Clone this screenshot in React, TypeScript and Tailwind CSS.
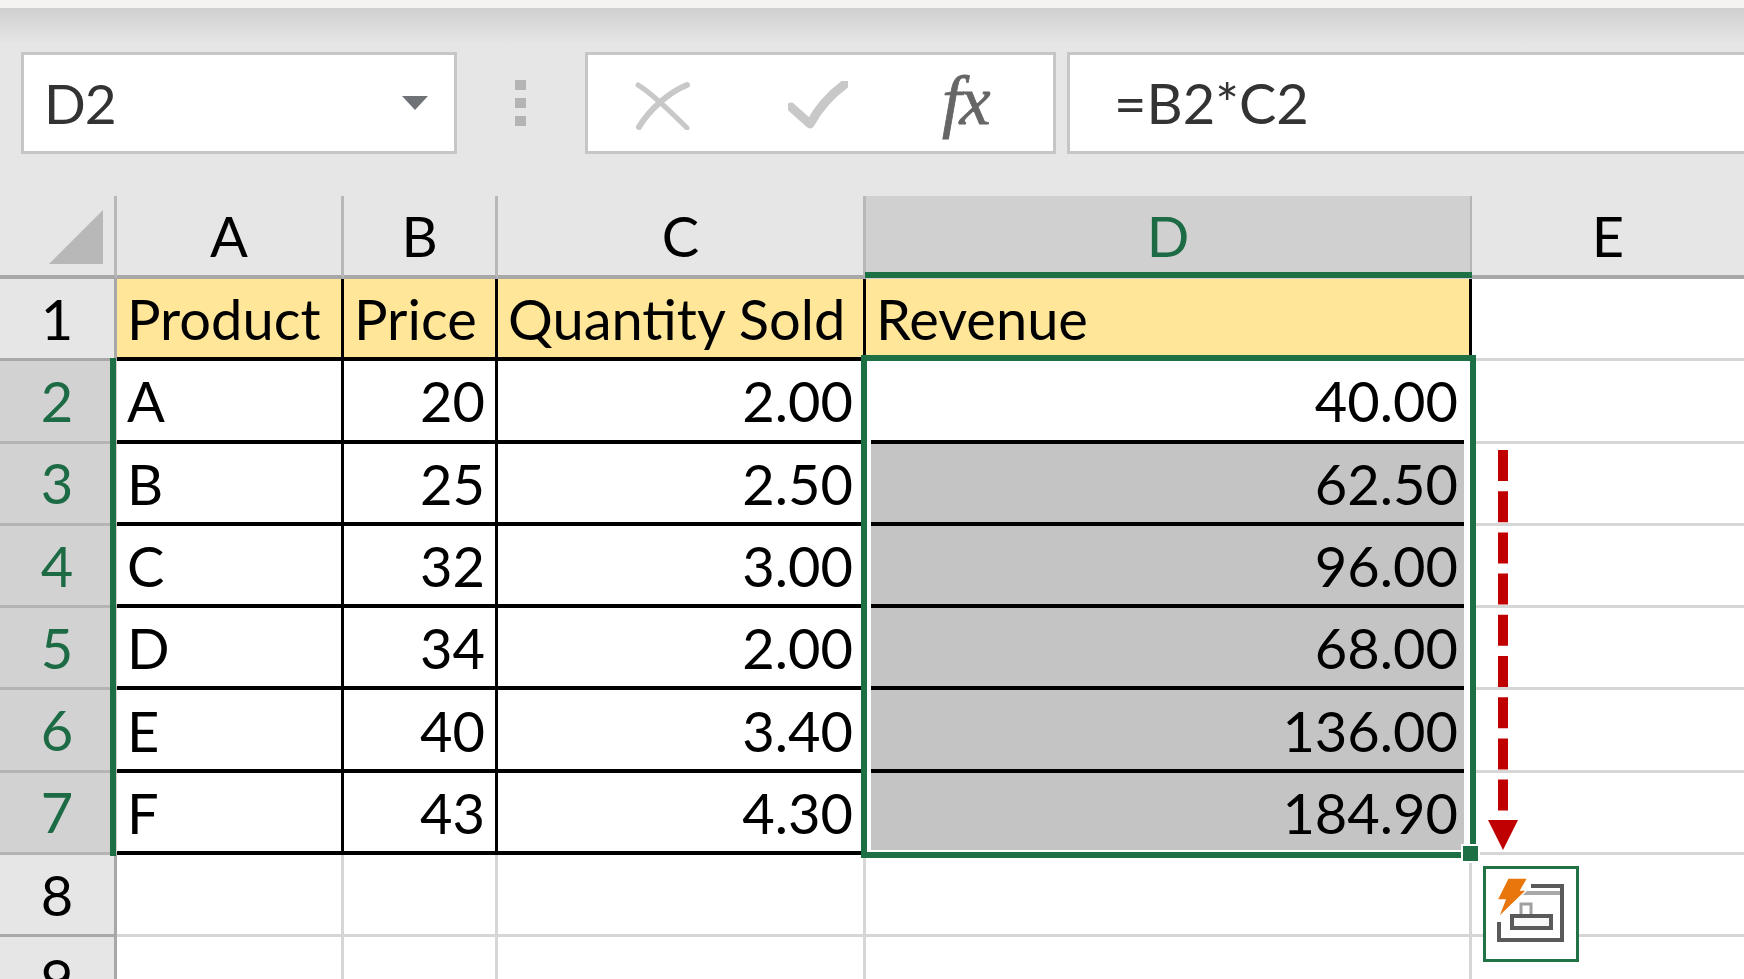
const font = "[font-family:Lato,'Open_Sans',sans-serif]";
const cols = ["A", "B", "C", "D", "E"];
const rows = [
  ["A", "20", "2.00", "40.00"],
  ["B", "25", "2.50", "62.50"],
  ["C", "32", "3.00", "96.00"],
  ["D", "34", "2.00", "68.00"],
  ["E", "40", "3.40", "136.00"],
  ["F", "43", "4.30", "184.90"],
];

function Cell({ children, right, className = "" }: { children?: React.ReactNode; right?: boolean; className?: string }) {
  return (
    <div className={`relative flex items-center whitespace-nowrap border-r-[3px] border-b-[4px] border-black pt-[2px] text-black text-[56px] ${right ? "justify-end pr-[10px]" : "pl-[10px]"} ${className}`}>
      {children}
    </div>
  );
}

function SelectedCell({ value, index }: { value: string; index: number }) {
  const gray = index > 0;
  const last = index === 5;
  return (
    <div className="relative flex items-center justify-end whitespace-nowrap bg-white pt-[2px] pb-[4px] pr-[14px] text-black text-[56px]">
      <div className={`absolute left-[5px] right-[8px] top-0 ${last ? "bottom-[5px]" : "bottom-0 border-b-[4px] border-black"} ${gray ? "bg-[#c4c4c4]" : "bg-white"}`} />
      <span className="relative">{value}</span>
    </div>
  );
}

function Empty({ last }: { last?: boolean }) {
  return <div className={`bg-white border-b-[3px] border-[#d6d6d6] ${last ? "" : "border-r-[3px]"}`} />;
}

function RowHead({ n, sel }: { n: number; sel?: boolean }) {
  return (
    <div className={`flex items-center justify-center text-[56px] border-b-[3px] ${sel ? "bg-[#d2d2d2] text-[#1c6b45] border-[#b4b4b4] pr-[3px]" : "bg-[#e6e6e6] text-black border-r-[3px] border-r-[#a8a8a8] border-b-[#a8a8a8]"}`}>
      {n}
    </div>
  );
}

export default function App() {
  return (
    <div className={`relative w-[1744px] h-[979px] overflow-hidden bg-[#e6e6e6] ${font}`}>
      <div className="h-[8px] bg-[#f4f3f1]" />
      <div className="h-[36px] bg-gradient-to-b from-[#cfcfcf] to-[#e6e6e6]" />
      <div className="flex h-[102px] mt-[8px] pl-[21px] items-stretch">
        <div className="flex items-center w-[436px] bg-white border-[3px] border-[#c6c6c6] pl-[20px] pr-[26px] justify-between text-[#333] text-[55px] tracking-[-1px]">
          <span>D2</span>
          <svg width="26" height="14" viewBox="0 0 26 14"><path d="M0 0h26L13 14z" fill="#6f7276" /></svg>
        </div>
        <div className="w-[128px] flex items-center justify-center">
          <svg width="12" height="46" viewBox="0 0 12 46" fill="#b4b4b4"><rect width="11" height="10" /><rect y="18" width="11" height="10" /><rect y="36" width="11" height="10" /></svg>
        </div>
        <div className="flex items-center w-[471px] bg-white border-[3px] border-[#c6c6c6] relative">
          <svg className="ml-[47px] mt-[6px] blur-[0.6px]" width="56" height="48" viewBox="0 0 56 48" fill="none"><path d="M3 3C18 12 38 32 52 46" stroke="#c8c8c8" strokeWidth="5" strokeLinecap="round" /><path d="M52 3C34 10 14 28 4 45" stroke="#c8c8c8" strokeWidth="6" strokeLinecap="round" /></svg>
          <svg className="ml-[97px] mt-[6px] blur-[0.6px]" width="60" height="50" viewBox="0 0 60 50" fill="none"><path d="M3 26L22 43C30 28 42 14 57 3" stroke="#c8c8c8" strokeWidth="9" strokeLinejoin="round" strokeLinecap="round" /></svg>
          <span className="ml-[94px] mt-[-4px] font-['Liberation_Serif'] italic leading-none text-[#666666] whitespace-nowrap [-webkit-text-stroke:0.8px_#666666] text-[70px] tracking-[-2px]">
            fx
          </span>
        </div>
        <div className="ml-[11px] flex-1 flex items-center bg-white border-[3px] border-r-0 border-[#c6c6c6] pl-[44px] text-[#333] text-[56px]">
          =B2*C2
        </div>
      </div>
      <div className="mt-[42px] grid grid-cols-[117px_227px_154px_368px_606px_1fr] grid-rows-[83px_repeat(8,82.3px)]">
        <div className="flex items-end justify-end pr-[11px] pb-[11px] border-r-[3px] border-r-[#b8b8b8] border-b-[4px] border-b-[#a8a8a8]">
          <svg width="54" height="54" viewBox="0 0 54 54"><path d="M54 0V54H0z" fill="#b8b8b8" /></svg>
        </div>
        {cols.map((c) => (
          <div key={c} className={`flex items-center justify-center text-[56px] ${c === "D" ? "bg-[#d0d0d0] text-[#1c6b45] pb-[4px] border-r-[2px] border-r-[#b4b4b4]" : "text-black border-b-[4px] border-b-[#a8a8a8] " + (c === "E" ? "" : "border-r-[3px] border-r-[#b8b8b8]")}`}>
            {c}
          </div>
        ))}
        <RowHead n={1} />
        {["Product", "Price", "Quantity Sold", "Revenue"].map((t) => (
          <Cell key={t} className="bg-[#ffe699]">{t}</Cell>
        ))}
        <Empty last />
        {rows.map((r, i) => (
          <div key={i} className="contents">
            <RowHead n={i + 2} sel />
            <Cell className="bg-white">{r[0]}</Cell>
            <Cell className="bg-white" right>{r[1]}</Cell>
            <Cell className="bg-white" right>{r[2]}</Cell>
            <SelectedCell value={r[3]} index={i} />
            <Empty last />
          </div>
        ))}
        <RowHead n={8} />
        <Empty /><Empty /><Empty /><Empty /><Empty last />
        <RowHead n={9} />
        <Empty /><Empty /><Empty /><Empty /><Empty last />
      </div>

      {/* selection outlines */}
      <div className="absolute left-[110px] top-[358px] w-[6px] h-[498px] bg-[#1d7044]" />
      <div className="absolute left-[861px] top-[355px] w-[615px] h-[503px] border-[6px] border-[#1d7044]" />
      <div className="absolute left-[865px] top-[272px] w-[607px] h-[6px] bg-[#1d7044]" />
      <div className="absolute left-[1461px] top-[844px] w-[19px] h-[19px] bg-[#1d7044] border-[2px] border-white" />

      {/* red dashed arrow */}
      <svg className="absolute left-[1486px] top-[448px]" width="34" height="404" viewBox="0 0 34 404">
        <path d="M17 2V363" stroke="#c00000" strokeWidth="10" strokeDasharray="31 10.2" fill="none" />
        <path d="M2 372H32L17 402z" fill="#c00000" />
      </svg>

      {/* quick analysis */}
      <div className="absolute left-[1483px] top-[866px] w-[96px] h-[96px] border-[3px] border-[#217346] bg-white">
        <svg className="absolute left-[9px] top-[7px] blur-[0.6px]" width="72" height="70" viewBox="0 0 72 70" fill="none">
          <path d="M36 10H67V64H4V46" stroke="#5a5a5a" strokeWidth="4" />
          <path d="M28 17H65" stroke="#a8a8a8" strokeWidth="4" />
          <path d="M26 39V28H36V39" stroke="#a0a0a0" strokeWidth="3" />
          <rect x="17" y="40" width="39" height="12" stroke="#5a5a5a" strokeWidth="4" fill="#f8f8f8" />
          <path d="M13 2H33L26 14H32L3 42L10 24H2z" fill="#e8760c" stroke="white" strokeWidth="1.5" />
        </svg>
      </div>
    </div>
  );
}
